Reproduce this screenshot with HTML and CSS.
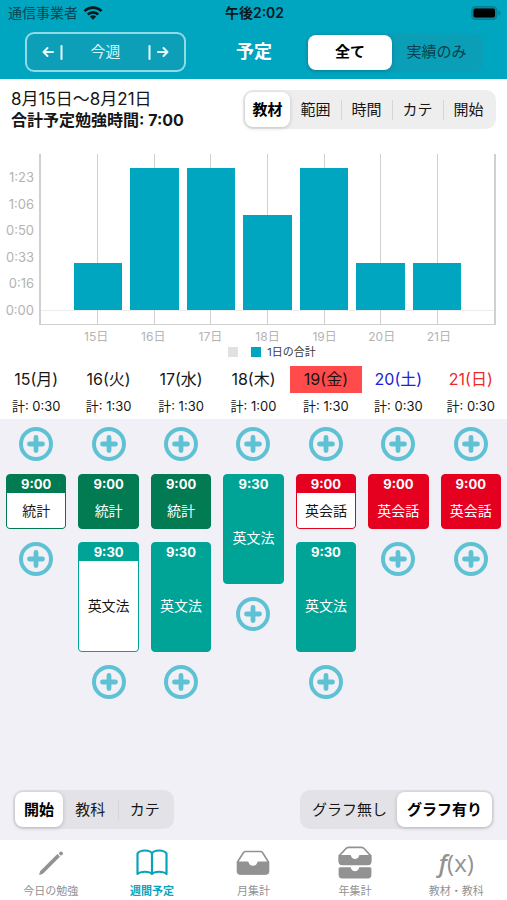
FILE: index.html
```
<!DOCTYPE html>
<html lang="ja">
	<head>
		<meta charset="utf-8" />
		<meta name="viewport" content="width=device-width, initial-scale=1">
		<title>予定</title>
		<link rel="stylesheet" href="styles.css">
	</head>
	<body>
		<svg class="defs" aria-hidden="true">
			<symbol id="plus" viewBox="0 0 34 34">
				<circle cx="17" cy="17" r="15" fill="none" stroke="currentColor" stroke-width="4"/>
				<path d="M17 10.500v13M10.500 17h13" stroke="currentColor" stroke-width="4.800" stroke-linecap="round"/>
			</symbol>
		</svg>

		<header class="top">
			<div class="status">
				<span class="carrier">通信事業者
					<svg width="20" height="14" viewBox="0 0 20 14" aria-hidden="true">
						<g fill="none" stroke="#06191d" stroke-width="2.6">
							<path d="M1.5 5.2a12 12 0 0 1 17 0"/>
							<path d="M4.8 8.5a7.4 7.4 0 0 1 10.4 0"/>
						</g>
						<path d="M6.9 10.6a4.4 4.4 0 0 1 6.2 0L10 13.7z" fill="#06191d"/>
					</svg>
				</span>
				<span class="clock">午後2:02</span>
				<svg class="battery" width="30" height="14" viewBox="0 0 30 14" aria-hidden="true">
					<rect x="0.5" y="0.5" width="25.5" height="13" rx="4" fill="#07859a" stroke="#087f93"/>
					<rect x="2.5" y="2.5" width="21.5" height="9" rx="2" fill="#000"/>
					<path d="M27.5 4.5q2 .5 2 2.5t-2 2.500z" fill="#087f93"/>
				</svg>
			</div>
			<nav class="nav">
				<div class="week">
					<button type="button" aria-label="前の週">
						<svg width="22" height="16" viewBox="0 0 22 16"><path d="M11 8H1.500M5.500 4l-4 4 4 4M19.500 2v13"/></svg>
					</button>
					<button type="button">今週</button>
					<button type="button" aria-label="次の週">
						<svg width="22" height="16" viewBox="0 0 22 16"><path d="M11 8h9.500M16.500 4l4 4-4 4M2.500 2v13"/></svg>
					</button>
				</div>
				<h1>予定</h1>
				<div class="seg seg-top">
					<button type="button" class="on">全て</button>
					<button type="button">実績のみ</button>
				</div>
			</nav>
		</header>

		<main>
			<section class="summary">
				<div class="total">
					<p class="range">8月15日〜8月21日</p>
					<p><strong>合計予定勉強時間: 7:00</strong></p>
				</div>
				<div class="seg seg-kind">
					<button type="button" class="on">教材</button>
					<button type="button">範囲</button>
					<button type="button" class="line">時間</button>
					<button type="button" class="line">カテ</button>
					<button type="button" class="line">開始</button>
				</div>
			</section>

			<section class="chart">
				<div class="y-axis">
					<span>1:23</span>
					<span>1:06</span>
					<span>0:50</span>
					<span>0:33</span>
					<span>0:16</span>
					<span>0:00</span>
				</div>
				<div class="plot">
					<div class="slot"><div class="bar" style="height: 30.3%"></div></div>
					<div class="slot"><div class="bar" style="height: 91%"></div></div>
					<div class="slot"><div class="bar" style="height: 91%"></div></div>
					<div class="slot"><div class="bar" style="height: 60.7%"></div></div>
					<div class="slot"><div class="bar" style="height: 91%"></div></div>
					<div class="slot"><div class="bar" style="height: 30.3%"></div></div>
					<div class="slot"><div class="bar" style="height: 30.3%"></div></div>
				</div>
				<div class="x-axis">
					<span>15日</span>
					<span>16日</span>
					<span>17日</span>
					<span>18日</span>
					<span>19日</span>
					<span>20日</span>
					<span>21日</span>
				</div>
				<div class="legend">
					<i class="key"></i>
					<i class="key key-total"></i>
					<span>1日の合計</span>
				</div>
			</section>

			<section class="days">
				<div class="day"><h2>15(月)</h2><p>計: 0:30</p></div>
				<div class="day"><h2>16(火)</h2><p>計: 1:30</p></div>
				<div class="day"><h2>17(水)</h2><p>計: 1:30</p></div>
				<div class="day"><h2>18(木)</h2><p>計: 1:00</p></div>
				<div class="day today"><h2>19(金)</h2><p>計: 1:30</p></div>
				<div class="day sat"><h2>20(土)</h2><p>計: 0:30</p></div>
				<div class="day sun"><h2>21(日)</h2><p>計: 0:30</p></div>
			</section>

			<section class="schedule">
				<div class="col">
					<button type="button" class="add" aria-label="追加"><svg><use href="#plus"/></svg></button>
					<button type="button" class="card green open"><b>9:00</b><span>統計</span></button>
					<button type="button" class="add" aria-label="追加"><svg><use href="#plus"/></svg></button>
				</div>
				<div class="col">
					<button type="button" class="add" aria-label="追加"><svg><use href="#plus"/></svg></button>
					<button type="button" class="card green"><b>9:00</b><span>統計</span></button>
					<button type="button" class="card teal open long"><b>9:30</b><span>英文法</span></button>
					<button type="button" class="add" aria-label="追加"><svg><use href="#plus"/></svg></button>
				</div>
				<div class="col">
					<button type="button" class="add" aria-label="追加"><svg><use href="#plus"/></svg></button>
					<button type="button" class="card green"><b>9:00</b><span>統計</span></button>
					<button type="button" class="card teal long"><b>9:30</b><span>英文法</span></button>
					<button type="button" class="add" aria-label="追加"><svg><use href="#plus"/></svg></button>
				</div>
				<div class="col">
					<button type="button" class="add" aria-label="追加"><svg><use href="#plus"/></svg></button>
					<button type="button" class="card teal long"><b>9:30</b><span>英文法</span></button>
					<button type="button" class="add" aria-label="追加"><svg><use href="#plus"/></svg></button>
				</div>
				<div class="col">
					<button type="button" class="add" aria-label="追加"><svg><use href="#plus"/></svg></button>
					<button type="button" class="card red open"><b>9:00</b><span>英会話</span></button>
					<button type="button" class="card teal long"><b>9:30</b><span>英文法</span></button>
					<button type="button" class="add" aria-label="追加"><svg><use href="#plus"/></svg></button>
				</div>
				<div class="col">
					<button type="button" class="add" aria-label="追加"><svg><use href="#plus"/></svg></button>
					<button type="button" class="card red"><b>9:00</b><span>英会話</span></button>
					<button type="button" class="add" aria-label="追加"><svg><use href="#plus"/></svg></button>
				</div>
				<div class="col">
					<button type="button" class="add" aria-label="追加"><svg><use href="#plus"/></svg></button>
					<button type="button" class="card red"><b>9:00</b><span>英会話</span></button>
					<button type="button" class="add" aria-label="追加"><svg><use href="#plus"/></svg></button>
				</div>
			</section>

			<section class="options">
				<div class="seg seg-sort">
					<button type="button" class="on">開始</button>
					<button type="button">教科</button>
					<button type="button" class="line">カテ</button>
				</div>
				<div class="seg seg-graph">
					<button type="button">グラフ無し</button>
					<button type="button" class="on">グラフ有り</button>
				</div>
			</section>
		</main>

		<nav class="tabs">
			<a href="#">
				<svg width="36" height="34" viewBox="0 0 36 34" aria-hidden="true">
					<path d="M7.800 25L24.300 8.500l2.200 2.200L10 27.200l-3.300 1.200z" fill="currentColor" stroke="currentColor" stroke-linejoin="round"/>
					<circle cx="28" cy="7.500" r="1.900" fill="currentColor"/>
				</svg>
				<span>今日の勉強</span>
			</a>
			<a href="#" class="current">
				<svg width="36" height="34" viewBox="0 0 36 34" aria-hidden="true" fill="none" stroke="currentColor" stroke-width="2.200" stroke-linejoin="round">
					<path d="M18 7.500C16 3.500 6 3.500 3.500 7.500v20.500c3-3 12-3 14.500 0 2.500-3 11.500-3 14.500 0V7.500C30 3.500 20 3.500 18 7.500zM18 7.500v20.500"/>
				</svg>
				<span>週間予定</span>
			</a>
			<a href="#">
				<svg width="36" height="34" viewBox="0 0 36 34" aria-hidden="true">
					<path d="M2.500 16L8.500 6.500q.8-1 2-1h15q1.200 0 2 1l6 9.500v9q0 3-3 3h-25q-3 0-3-3z" fill="none" stroke="currentColor" stroke-width="1.600"/>
					<path d="M2 15.500h10.500q1 0 1.300 1.200.8 3 4.200 3t4.200-3q.3-1.200 1.300-1.200H34V25q0 3.500-3.500 3.500h-25Q2 28.500 2 25z" fill="currentColor"/>
				</svg>
				<span>月集計</span>
			</a>
			<a href="#">
				<svg width="36" height="34" viewBox="0 0 36 34" aria-hidden="true">
					<path d="M2.500 9.500L9 2.500q1-1.200 2.500-1.200h13q1.500 0 2.500 1.200l6.500 7V15q0 3-3 3h-25q-3 0-3-3z" fill="none" stroke="currentColor" stroke-width="1.800"/>
					<path d="M1.600 9h12l1 2.200q1 1.800 3.400 1.800t3.400-1.800l1-2.200h12v6.500q0 3.700-3.500 3.700h-25.800q-3.500 0-3.500-3.700z" fill="currentColor"/>
					<path d="M1.600 22.700q0-1.500 1.500-1.500h10.500l1 2.200q1 1.800 3.400 1.800t3.400-1.800l1-2.200h10.500q1.500 0 1.500 1.500v6q0 3.700-3.500 3.700H5.100q-3.500 0-3.500-3.700z" fill="currentColor"/>
				</svg>
				<span>年集計</span>
			</a>
			<a href="#">
				<em><i>f</i>(x)</em>
				<span>教材・教科</span>
			</a>
		</nav>
	</body>
</html>
```
FILE: styles.css
```
* {
	box-sizing: border-box;
}
body {
	margin: 0;
	min-height: 100vh;
	display: flex;
	flex-direction: column;
	background: #fff;
	color: #161616;
	font-family: Inter, "Noto Sans CJK JP", sans-serif;
}
h1, h2, p {
	margin: 0;
	font-weight: 400;
}
button {
	margin: 0;
	padding: 0;
	border: 0;
	background: none;
	color: inherit;
	font: inherit;
	white-space: nowrap;
}
.defs {
	display: none;
}

/* header */
.top {
	background: #00a5c0;
	padding-bottom: 7px;
}
.status {
	display: grid;
	grid-template-columns: 1fr auto 1fr;
	align-items: center;
	height: 26px;
	padding: 0 6px 0 8px;
	font-size: 14px;
	line-height: 20px;
}
.carrier {
	display: flex;
	align-items: center;
	gap: 5px;
	color: #0b4450;
}
.clock {
	color: #06191d;
	font-weight: 600;
}
.battery {
	justify-self: end;
}
.nav {
	display: grid;
	grid-template-columns: 1fr auto 1fr;
	align-items: center;
	padding: 6px 24px 0 25px;
}
.nav h1 {
	color: #fff;
	font-size: 18px;
	line-height: 24px;
	font-weight: 700;
}
.week {
	display: grid;
	grid-template-columns: 1fr 1fr 1fr;
	width: 161px;
	height: 40px;
	border: 2px solid #8fdbe8;
	border-radius: 9px;
	background: #0d9fb8;
	color: #d9f4f8;
	font-size: 15px;
	line-height: 20px;
}
.week svg {
	display: block;
	margin: auto;
	fill: none;
	stroke: #e9fafc;
	stroke-width: 2;
	stroke-linecap: round;
	stroke-linejoin: round;
}

/* segmented controls */
.seg {
	display: grid;
	grid-auto-flow: column;
	grid-auto-columns: 1fr;
	height: 39px;
	padding: 2px;
	border-radius: 10px;
	background: #eeeeef;
	font-size: 15px;
	line-height: 20px;
}
.seg button {
	border-radius: 8px;
}
.seg .on {
	background: #fff;
	color: #000;
	font-weight: 700;
	box-shadow: 0 1px 4px rgba(0, 0, 0, 0.2);
}
.seg .line {
	background: linear-gradient(#d6d6da, #d6d6da) left center / 1px 20px no-repeat;
}
.seg-top {
	justify-self: end;
	grid-auto-columns: auto;
	grid-template-columns: 84px 1fr;
	width: 177px;
	background: #0a9fb7;
	color: #06414d;
}
.seg-kind {
	grid-auto-columns: auto;
	grid-template-columns: 45px repeat(4, 1fr);
	width: 253px;
	margin-top: 1px;
}

/* summary */
.summary {
	display: flex;
	justify-content: space-between;
	padding: 10px 11px 0;
}
.total {
	font-size: 16px;
	line-height: 21px;
	white-space: nowrap;
}
.range {
	font-size: 17px;
}

/* chart */
.chart {
	display: grid;
	grid-template-columns: 34px 1fr;
	column-gap: 5px;
	padding: 23px 11px 0 0;
	color: #b3b3b3;
	font-size: 12px;
	line-height: 16px;
}
.y-axis {
	display: flex;
	flex-direction: column;
	justify-content: space-between;
	padding: 15px 0 7px;
	text-align: right;
	font-size: 13px;
}
.plot {
	display: grid;
	grid-template-columns: repeat(7, 1fr);
	height: 171px;
	padding: 0 6.25%;
	border: solid #d0d0d0;
	border-width: 0 2px 1px;
	background: linear-gradient(#ececec, #ececec) left 0 bottom 13px / 100% 1px no-repeat;
}
.slot {
	display: flex;
	align-items: flex-end;
	justify-content: center;
	padding-bottom: 14px;
	background: linear-gradient(#d0d0d0, #d0d0d0) center / 1px 100% no-repeat;
}
.bar {
	width: 86%;
	background: #00a5c0;
}
.x-axis {
	grid-column: 2;
	display: grid;
	grid-template-columns: repeat(7, 1fr);
	padding: 4px 6.25% 0;
	text-align: center;
}
.legend {
	grid-column: 1 / -1;
	display: flex;
	align-items: center;
	justify-content: center;
	padding-left: 48px;
	color: #3c3c3c;
	font-size: 11px;
	line-height: 14px;
}
.key {
	width: 10px;
	height: 10px;
	margin-right: 13px;
	background: #e0e1e3;
}
.key-total {
	margin-right: 6px;
	background: #00a5c0;
}

/* week columns */
.days, .schedule {
	display: grid;
	grid-template-columns: repeat(7, 1fr);
}
.days {
	padding-top: 7px;
	text-align: center;
}
.day h2 {
	font-size: 16px;
	line-height: 27px;
}
.day p {
	font-size: 13px;
	line-height: 26px;
}
.today h2 { background: #ff4b4b; }
.sat h2 { color: #2020d8; }
.sun h2 { color: #f02828; }

main {
	flex: 1;
	display: flex;
	flex-direction: column;
}
.schedule {
	flex: 1;
	padding: 8px 0 16px;
	background: #f1f0f6;
}
.col {
	display: flex;
	flex-direction: column;
	align-items: center;
	gap: 13px;
	padding: 0 6px;
}
.add {
	width: 34px;
	height: 34px;
	color: #5fc2d4;
}
.add svg {
	display: block;
	width: 34px;
	height: 34px;
}
.card {
	display: flex;
	flex-direction: column;
	width: 100%;
	height: 55px;
	overflow: hidden;
	border: 1px solid;
	border-radius: 4px;
	color: #fff;
	font-size: 14px;
}
.card.long {
	height: 110px;
}
.card b {
	font-size: 13px;
	line-height: 18px;
	font-weight: 700;
}
.card span {
	flex: 1;
	display: grid;
	place-items: center;
	line-height: 20px;
}
.green { background: #027a52; border-color: #027a52; }
.teal { background: #00a497; border-color: #00a497; }
.red { background: #e60020; border-color: #e60020; }
.open span {
	background: #fff;
	color: #161616;
}

/* bottom */
.options {
	display: flex;
	justify-content: space-between;
	padding: 0 13px 11px;
	background: #f1f0f6;
}
.options .seg {
	background: #e3e2e7;
}
.seg-sort {
	grid-auto-columns: auto;
	grid-template-columns: 48px 1fr 1fr;
	width: 161px;
}
.seg-graph {
	width: 194px;
}
.tabs {
	display: grid;
	grid-template-columns: repeat(5, 1fr);
	height: 60px;
	background: #fff;
}
.tabs a {
	display: flex;
	flex-direction: column;
	align-items: center;
	padding-top: 6px;
	color: #929292;
	font-size: 11px;
	line-height: 16px;
	text-decoration: none;
}
.tabs svg, .tabs em {
	height: 34px;
	margin-bottom: 3px;
}
.tabs em {
	font: 24px/34px "Open Sans", sans-serif;
}
.tabs em i {
	font-weight: 600;
}
.tabs .current {
	color: #0ba3bb;
	font-weight: 700;
}
```
